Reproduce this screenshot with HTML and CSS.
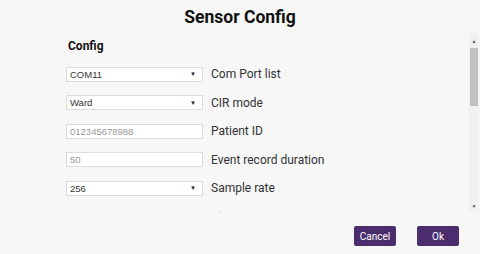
FILE: index.html
```html
<!DOCTYPE html>
<html>
<head>
<meta charset="utf-8">
<link rel="stylesheet" href="styles.css">
</head>
<body>
<div class="title">Sensor Config</div>
<div class="main">
  <div class="content">
    <div class="heading">Config</div>
    <div class="row">
      <div class="field select"><span>COM11</span><span class="arrow">&#9660;</span></div>
      <div class="label">Com Port list</div>
    </div>
    <div class="row">
      <div class="field select"><span>Ward</span><span class="arrow">&#9660;</span></div>
      <div class="label">CIR mode</div>
    </div>
    <div class="row">
      <div class="field"><span class="ph">012345678988</span></div>
      <div class="label">Patient ID</div>
    </div>
    <div class="row">
      <div class="field"><span class="ph">50</span></div>
      <div class="label">Event record duration</div>
    </div>
    <div class="row">
      <div class="field select"><span>256</span><span class="arrow">&#9660;</span></div>
      <div class="label">Sample rate</div>
    </div>
    <div class="row partial">
      <div class="pfield">&#183;</div>
      <div class="label">Filter</div>
    </div>
  </div>
  <div class="scrollbar">
    <div class="sb-arrow">&#9650;</div>
    <div class="thumb"></div>
    <div class="spacer"></div>
    <div class="sb-arrow">&#9660;</div>
  </div>
</div>
<div class="footer">
  <button class="btn">Cancel</button>
  <button class="btn">Ok</button>
</div>
</body>
</html>
```

FILE: styles.css
```css
html, body {
  margin: 0;
  padding: 0;
}
body {
  width: 480px;
  height: 254px;
  background: #f7f7f7;
  font-family: Roboto, "Liberation Sans", sans-serif;
  color: #222;
  overflow: hidden;
}
.title {
  height: 33px;
  line-height: 34px;
  text-align: center;
  font-size: 17.5px;
  font-weight: bold;
  color: #111;
}
.main {
  display: flex;
  height: 180px;
}
.content {
  flex: 1;
  overflow: hidden;
  padding-left: 66px;
}
.heading {
  margin-top: 5px;
  height: 16px;
  line-height: 16px;
  font-size: 12px;
  font-weight: bold;
  color: #111;
  margin-left: 2px;
  margin-bottom: 6px;
}
.row {
  height: 28.5px;
  display: flex;
  align-items: center;
}
.row.partial {
  align-items: flex-start;
  padding-top: 8px;
  color: #bbb;
}
.field {
  width: 132px;
  height: 13px;
  border: 1px solid #dcdcdc;
  background: #fff;
  display: flex;
  align-items: center;
  justify-content: space-between;
  padding: 0 0 0 3px;
  box-sizing: content-box;
  font-family: "Liberation Sans", Arial, sans-serif;
  font-size: 9.5px;
  color: #333;
}
.pfield {
  width: 118px;
  padding-left: 17px;
  font-size: 12px;
  color: #aaa;
}
.row.partial .label {
  color: #ccc;
}
.field .ph {
  color: #999;
}
.field .arrow {
  font-size: 6px;
  color: #222;
  margin-right: 6px;
}
.label {
  margin-left: 8px;
  font-size: 12px;
  color: #333;
}
.scrollbar {
  width: 10px;
  margin-right: 1px;
  background: #f1f1f1;
  display: flex;
  flex-direction: column;
  align-items: center;
  padding-top: 4px;
  padding-bottom: 3px;
}
.sb-arrow {
  height: 8px;
  line-height: 8px;
  font-size: 5px;
  color: #555;
}
.thumb {
  margin-top: 3px;
  width: 8px;
  height: 58px;
  background: #c2c2c2;
}
.spacer {
  flex: 1;
}
.footer {
  display: flex;
  justify-content: flex-end;
  gap: 21px;
  padding-top: 13px;
  padding-right: 21px;
}
.btn {
  width: 42px;
  height: 20px;
  border: none;
  border-radius: 2px;
  background: #4b2d6f;
  color: #fff;
  font-family: Roboto, "Liberation Sans", sans-serif;
  font-size: 10px;
  padding: 0;
}
```
